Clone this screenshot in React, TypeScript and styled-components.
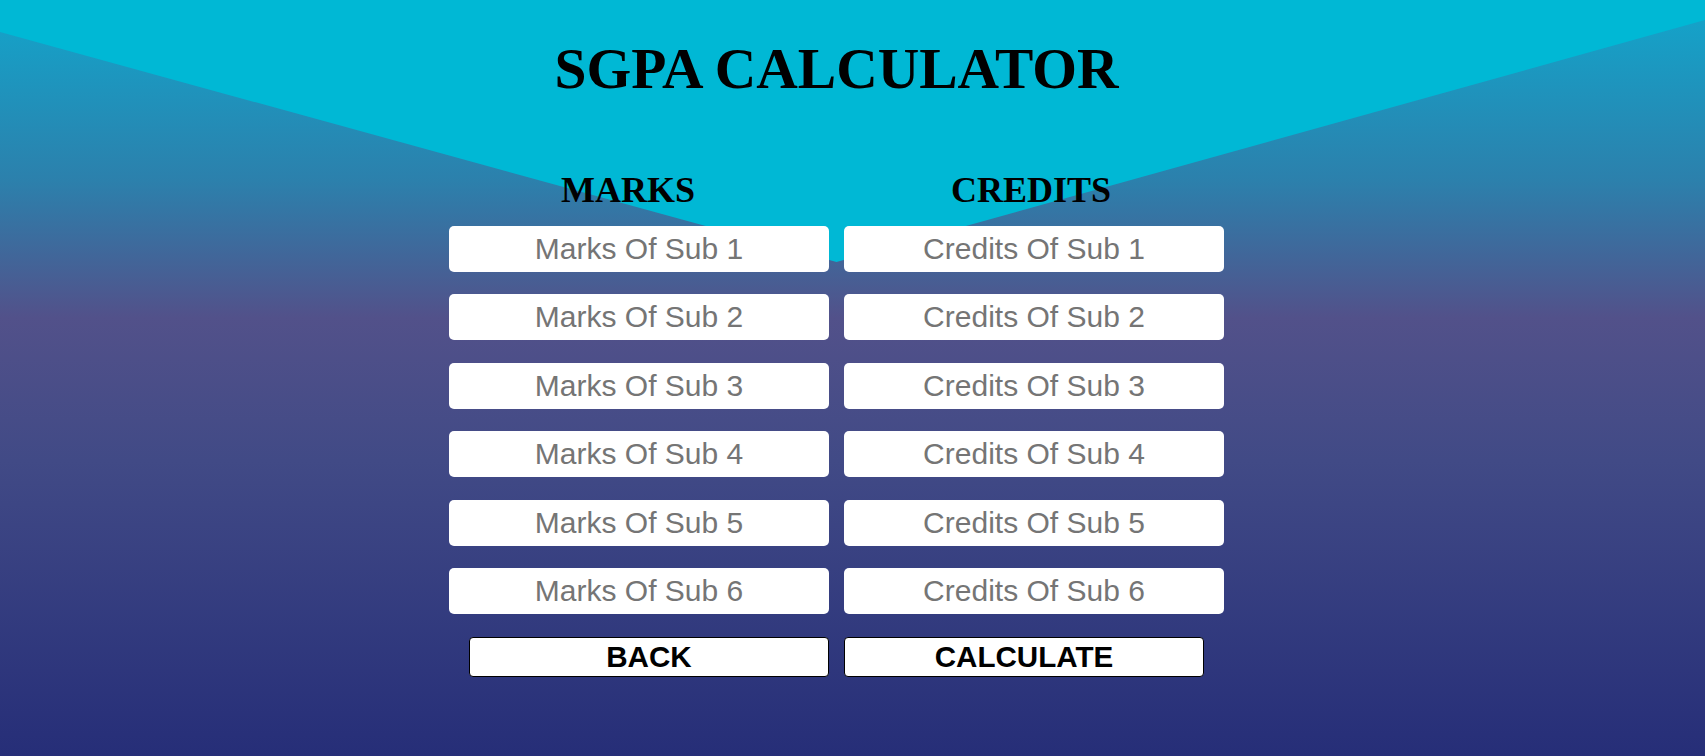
import React from 'react';
import styled, { createGlobalStyle } from 'styled-components';

const GlobalStyle = createGlobalStyle`
    html,
    body {
        margin: 0;
        padding: 0;
    }

    body {
        font-family: 'Liberation Sans', Arial, sans-serif;
    }
`;

const Page = styled.div`
    position: relative;
    min-height: 100vh;
    overflow: hidden;
    padding-right: 32px;
    box-sizing: border-box;
    background: linear-gradient(
        to bottom,
        #12a6cc 0%,
        #2c80ac 24%,
        #52518a 42%,
        #414a86 61%,
        #262e78 100%
    );

    &::before {
        content: '';
        position: absolute;
        inset: 0;
        background-color: #00b8d5;
        clip-path: polygon(
            0 0,
            100% 0,
            100% 20px,
            calc(50% - 16px) 262px,
            0 32px
        );
    }
`;

const Content = styled.div`
    position: relative;
    display: flex;
    flex-direction: column;
    align-items: center;
    padding-top: 40px;
`;

const Title = styled.h1`
    margin: 0;
    font-family: 'Liberation Serif', 'Times New Roman', serif;
    font-size: 57.5px;
    line-height: 1;
    font-weight: bold;
    color: #000;
`;

const Grid = styled.div`
    display: grid;
    grid-template-columns: 380px 380px;
    column-gap: 15px;
    row-gap: 22.6px;
`;

const HeadRow = styled(Grid)`
    margin-top: 74px;
    margin-bottom: 18px;
`;

const ColumnHead = styled.h2<{ $shift: number }>`
    margin: 0;
    padding-right: ${(p) => p.$shift}px;
    font-family: 'Liberation Serif', 'Times New Roman', serif;
    font-size: 36px;
    line-height: 1;
    font-weight: bold;
    text-align: center;
    color: #000;
`;

const Field = styled.input`
    box-sizing: border-box;
    width: 100%;
    height: 46px;
    padding: 0;
    border: none;
    border-radius: 5px;
    background: #fff;
    font-family: 'Liberation Sans', Arial, sans-serif;
    font-size: 30px;
    text-align: center;
    outline: none;

    &::placeholder {
        color: #757575;
    }
`;

const ActionButton = styled.button<{ $side: 'start' | 'end' }>`
    justify-self: ${(p) => p.$side};
    width: 360px;
    height: 40px;
    border: 1px solid #000;
    border-radius: 4px;
    background: #fff;
    color: #000;
    font-family: 'Liberation Sans', Arial, sans-serif;
    font-size: 29.6px;
    font-weight: bold;
    cursor: pointer;
`;

const subjects = [1, 2, 3, 4, 5, 6];

const App: React.FC = () => {
    return (
        <>
            <GlobalStyle />
            <Page>
                <Content>
                    <Title>SGPA CALCULATOR</Title>

                    <HeadRow>
                        <ColumnHead $shift={22}>MARKS</ColumnHead>
                        <ColumnHead $shift={6}>CREDITS</ColumnHead>
                    </HeadRow>

                    <Grid>
                        {subjects.map((n) => (
                            <React.Fragment key={n}>
                                <Field
                                    type="text"
                                    inputMode="decimal"
                                    placeholder={`Marks Of Sub ${n}`}
                                />
                                <Field
                                    type="text"
                                    inputMode="decimal"
                                    placeholder={`Credits Of Sub ${n}`}
                                />
                            </React.Fragment>
                        ))}
                        <ActionButton $side="end">BACK</ActionButton>
                        <ActionButton $side="start">CALCULATE</ActionButton>
                    </Grid>
                </Content>
            </Page>
        </>
    );
};

export default App;
